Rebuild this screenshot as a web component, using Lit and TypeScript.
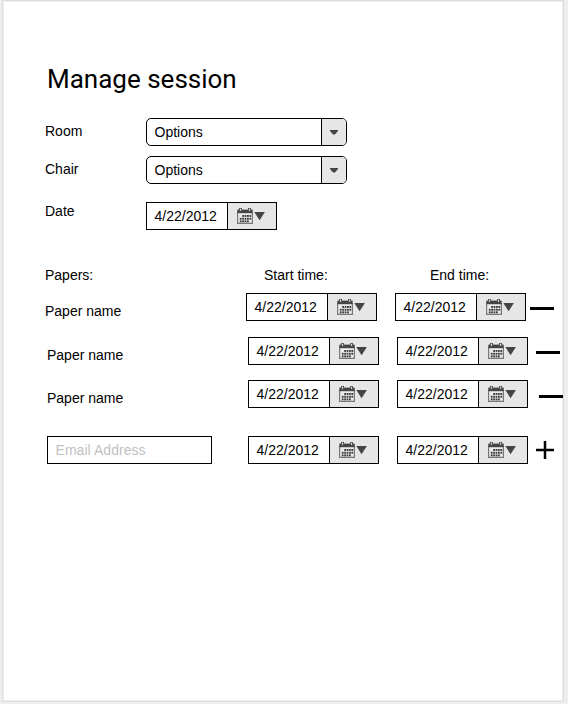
import { LitElement, html, css, svg } from "lit";
import { customElement, property } from "lit/decorators.js";

const columns = [2.8, 5.2, 7.6, 10, 12.4];
const dayDots = [
  ...columns.slice(1).map((x) => [x, 7]),
  ...columns.map((x) => [x, 9.8]),
  ...columns.slice(0, 4).map((x) => [x, 12.4]),
];

@customElement("select-box")
export class SelectBox extends LitElement {
  static styles = css`
    :host { display: block; }
    .box { box-sizing: border-box; width: 201px; height: 28px; display: flex; border: 1px solid #000; border-radius: 5px; background: #fff; overflow: hidden; }
    .value { flex: 1; padding-left: 7.5px; line-height: 26px; }
    .button { box-sizing: border-box; width: 25px; border-left: 1px solid #000; background: #e6e6e6; display: flex; align-items: flex-start; justify-content: center; padding-top: 11px; }
    svg { display: block; }
  `;
  @property() value = "";
  render() {
    return html`<div class="box">
      <span class="value">${this.value}</span>
      <span class="button"><svg width="8" height="5" viewBox="0 0 8 5"><path d="M0 0H8V.9L4.9 4.5H3.1L0 .9Z" fill="#444" /></svg></span>
    </div>`;
  }
}

@customElement("date-box")
export class DateBox extends LitElement {
  static styles = css`
    :host { display: block; }
    .box { box-sizing: border-box; width: 131px; height: 28px; display: flex; border: 1px solid #000; background: #fff; }
    .value { flex: 1; padding-left: 7.5px; line-height: 26px; white-space: nowrap; }
    .button { box-sizing: border-box; width: 49px; border-left: 1px solid #000; background: #e6e6e6; }
    svg { display: block; }
  `;
  @property() value = "";
  render() {
    return html`<div class="box">
      <span class="value">${this.value}</span>
      <span class="button"><svg width="48" height="26" viewBox="0 0 48 26">
        <g transform="translate(9 5)">
          <path d="M.6 4V15.4H15.4V4" fill="#ececec" stroke="#777" stroke-width="1.2" />
          <path d="M.3 1.6H15.7V5.2H.3Z" fill="#444" />
          <path d="M2 0H5V3.4H2ZM11 0H14V3.4H11Z" fill="#555" />
          <path d="M3 .8H4V2.8H3ZM12 .8H13V2.8H12Z" fill="#e6e6e6" />
          ${dayDots.map(([x, y]) => svg`<rect x=${x} y=${y} width="1.8" height="1.9" fill="#3c3c3c" />`)}
        </g>
        <path d="M26.3 9H36.9L31.6 17.3Z" fill="#444" />
      </svg></span>
    </div>`;
  }
}

@customElement("app-root")
export class AppRoot extends LitElement {
  static styles = css`
    :host { display: block; height: 704px; overflow: hidden; background: #eee; color: #000; font: 14px/16px "Liberation Sans", Arial, sans-serif; }
    .page { box-sizing: border-box; width: 562px; height: 702px; margin-left: 2px; padding: 62px 0 0 41px; border: 1px solid #ddd; outline: 1px solid #eee; outline-offset: -2px; background: #fff; }
    h1 { margin: 0 0 23px 3px; height: 32px; font: 400 26px/32px Roboto, sans-serif; white-space: nowrap; }
    .field { display: grid; grid-template-columns: 102px auto; height: 28px; margin-bottom: 10px; }
    .label { padding: 5px 0 0 1px; white-space: nowrap; }
    .date { margin-top: 18px; }
    .date .label { padding-top: 1px; }
    .heads { display: grid; grid-template-columns: 219px 166px auto; margin: 37px 0 10px 1px; height: 16px; }
    .row { display: grid; grid-template-columns: 202px 149px 131px auto; height: 28px; margin: 0 0 16px 2px; }
    .row.first { margin-left: 0; }
    .row.third { margin: -1px 0 28px 2px; }
    .name { padding-top: 10px; padding-left: 1px; }
    .email { box-sizing: border-box; width: 165px; height: 28px; margin-left: 1px; border: 1px solid #000; padding-left: 7.5px; line-height: 26px; letter-spacing: 0.05px; color: #bfbfbf; }
    .mark { display: block; position: relative; }
  `;

  private row(cls: string, x: number, y: number) {
    return html`<div class="row ${cls}">
      <span class="name">Paper name</span>
      <date-box value="4/22/2012"></date-box>
      <date-box value="4/22/2012"></date-box>
      <svg class="mark" width="40" height="28"><rect x=${x} y=${y} width="24" height="3" /></svg>
    </div>`;
  }

  render() {
    return html`<main class="page">
      <h1>Manage session</h1>
      <div class="field"><span class="label">Room</span><select-box value="Options"></select-box></div>
      <div class="field"><span class="label">Chair</span><select-box value="Options"></select-box></div>
      <div class="field date"><span class="label">Date</span><date-box value="4/22/2012"></date-box></div>
      <div class="heads"><span>Papers:</span><span>Start time:</span><span>End time:</span></div>
      ${this.row("first", 4, 14)}
      ${this.row("", 8, 14)}
      ${this.row("third", 11, 15)}
      <div class="row">
        <div class="email">Email Address</div>
        <date-box value="4/22/2012"></date-box>
        <date-box value="4/22/2012"></date-box>
        <svg class="mark" width="40" height="28"><path d="M8 14H26M17 5V23" stroke="#000" stroke-width="2.5" /></svg>
      </div>
    </main>`;
  }
}
